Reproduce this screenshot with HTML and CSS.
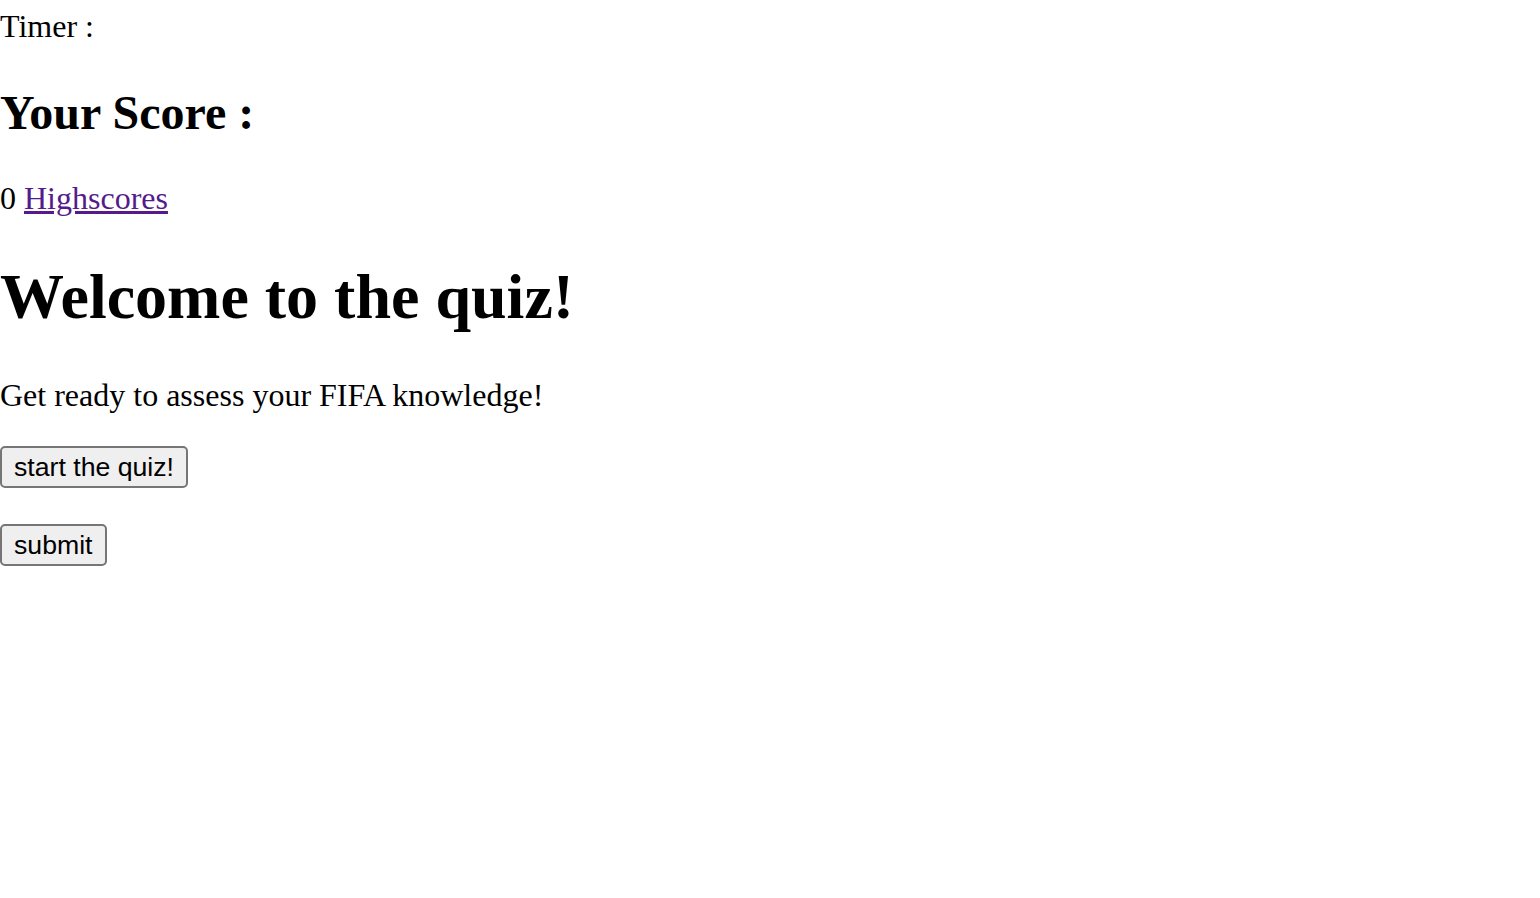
FILE: index.html
```html
<!DOCTYPE html>
<html lang="en">
<head>
<meta charset="utf-8">
<title>FIFA Quiz</title>
<link rel="stylesheet" href="styles.css">
</head>
<body>
<div class="timer">Timer : <span class="time"></span></div>
<h2 class="score-title">Your Score :</h2>
<div class="score-line"><span class="score">0</span> <a class="highscores" href="#">Highscores</a></div>
<h1 class="welcome">Welcome to the quiz!</h1>
<p class="intro">Get ready to assess your FIFA knowledge!</p>
<div class="actions">
  <button class="btn" type="button">start the quiz!</button>
  <button class="btn" type="button">submit</button>
</div>
</body>
</html>
```
FILE: styles.css
```css
html, body {
  background: #ffffff;
}
body {
  margin: 0;
  padding-top: 8px;
  font-family: "Liberation Serif", "Times New Roman", serif;
  font-size: 32px;
  color: #000000;
}
.timer {
  margin: 0;
}
.score-title {
  font-size: 48px;
  font-weight: bold;
  margin: 40px 0;
}
.score-line {
  margin: 0;
}
.highscores {
  color: #551a8b;
  text-decoration: underline;
}
.welcome {
  font-size: 64px;
  font-weight: bold;
  margin: 43px 0;
}
.intro {
  margin: 32px 0;
}
.actions {
  display: flex;
  flex-direction: column;
  align-items: flex-start;
  gap: 36px;
}
.btn {
  font-family: "Liberation Sans", Arial, sans-serif;
  font-size: 26.67px;
  color: #000000;
  background: #efefef;
  border: 2px solid #767676;
  border-radius: 5px;
  height: 42px;
  padding: 0 12px;
  margin: 0;
  line-height: 1;
}
```
